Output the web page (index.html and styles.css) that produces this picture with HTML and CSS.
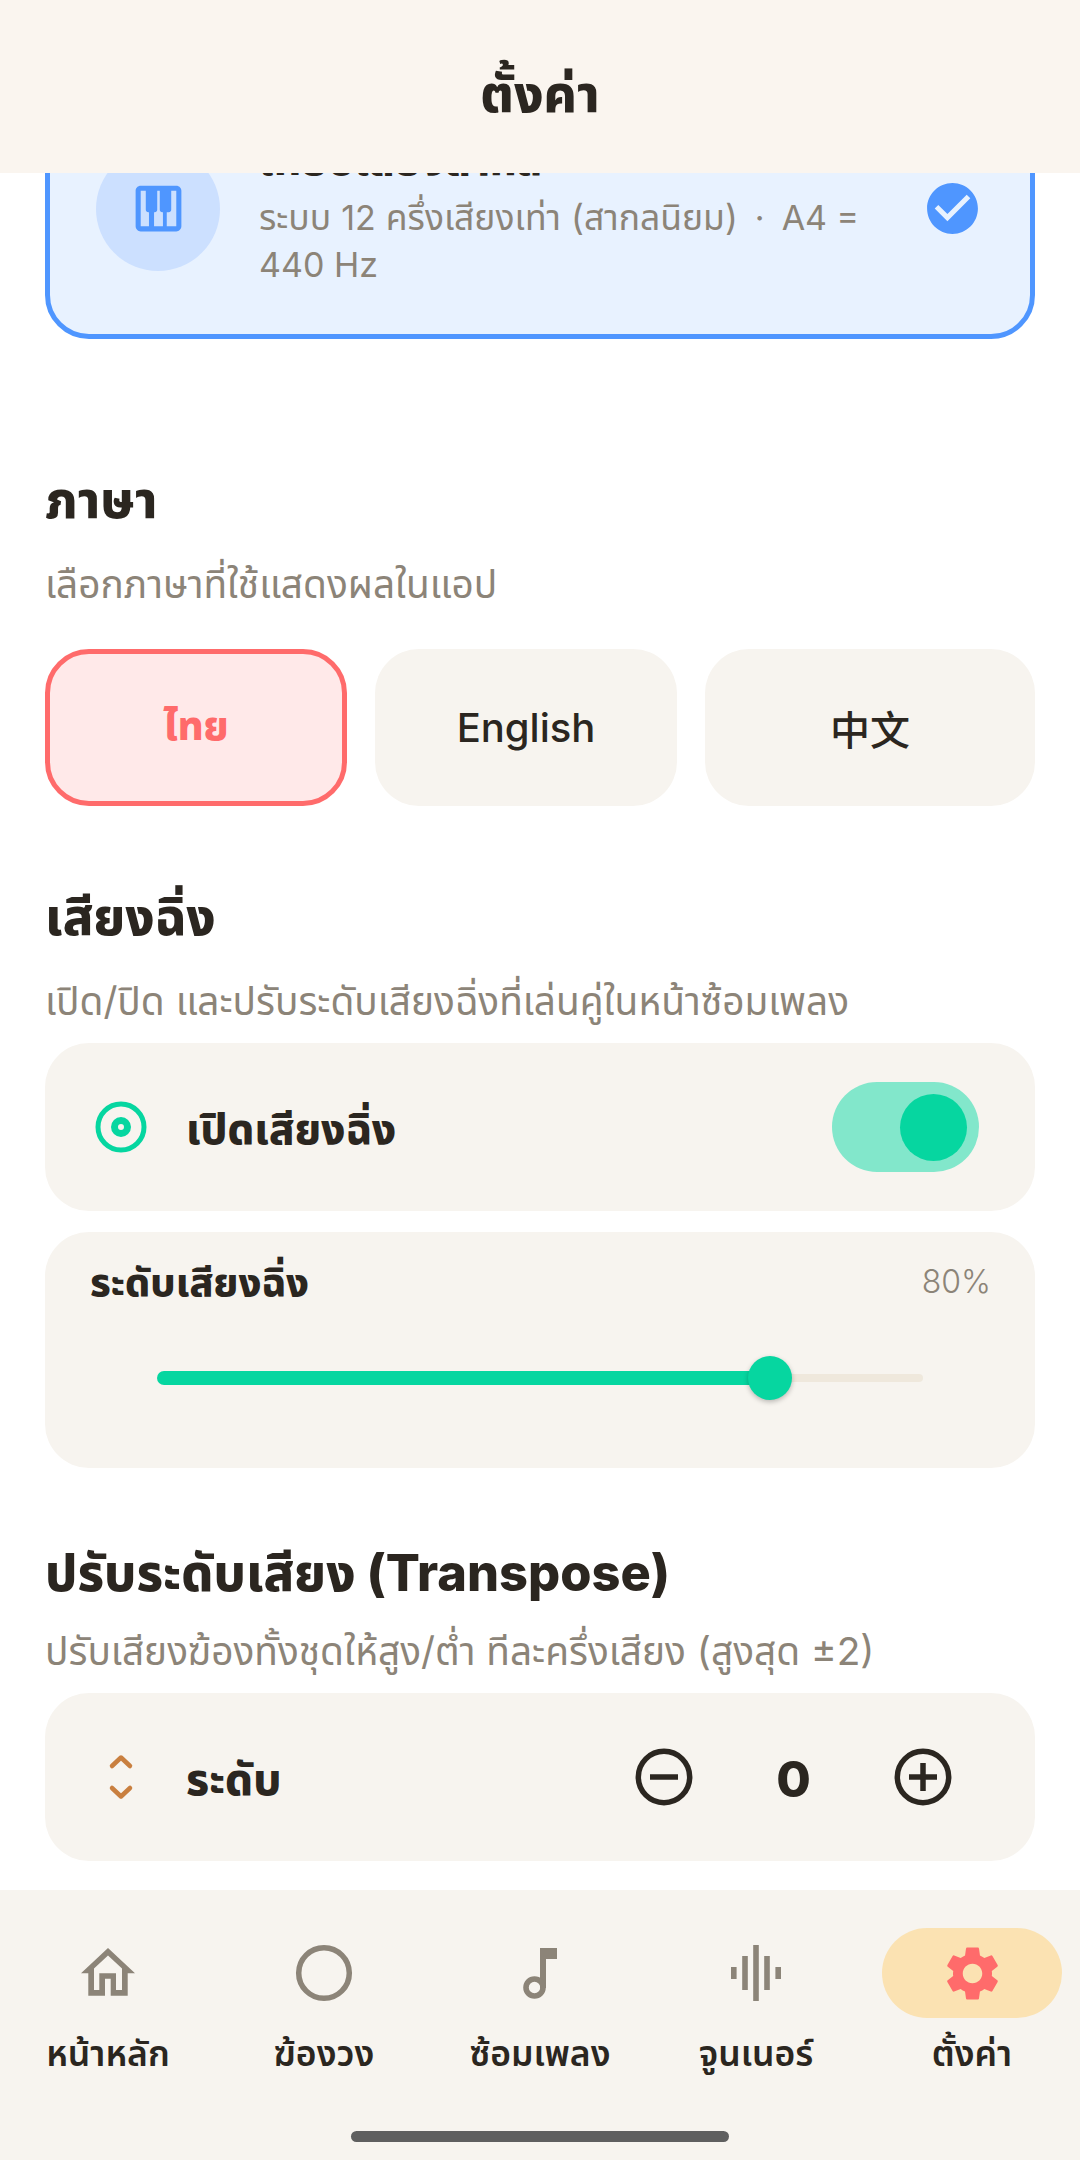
FILE: index.html
```html
<!DOCTYPE html>
<html lang="th">
<head>
    <meta charset="UTF-8">
    <meta name="viewport" content="width=device-width, initial-scale=1.0">
    <title>ตั้งค่า</title>
    <link rel="stylesheet" href="styles.css">
</head>
<body>
    <div class="app">
        <header class="top-bar">
            <h1 class="top-title">ตั้งค่า</h1>
        </header>

        <main class="content">
            <div class="tuning-card">
                <div class="tuning-icon">
                    <svg width="61" height="61" viewBox="0 0 24 24" fill="#4f96ff"><path d="M19 3H5c-1.1 0-2 .9-2 2v14c0 1.1.9 2 2 2h14c1.1 0 2-.9 2-2V5c0-1.1-.9-2-2-2zm-5.5 10.5h.25V19h-3.5v-5.5h.25c.55 0 1-.45 1-1V5h1v7.5c0 .55.45 1 1 1zM5 5h2v7.5c0 .55.45 1 1 1h.25V19H5V5zm14 14h-3.75v-5.5H16c.55 0 1-.45 1-1V5h2v14z"/></svg>
                </div>
                <div class="tuning-text">
                    <div class="tuning-name">เทียบเสียงสากล</div>
                    <div class="tuning-desc">ระบบ <span class="latin">12</span> ครึ่งเสียงเท่า (สากลนิยม) <span class="latin dot">·</span> <span class="latin">A4 =</span> <span class="latin">440 Hz</span></div>
                </div>
                <svg class="tuning-check" width="61" height="61" viewBox="0 0 24 24" fill="#4f96ff"><path d="M12 2C6.48 2 2 6.48 2 12s4.48 10 10 10 10-4.48 10-10S17.52 2 12 2zM10 17l-5-5 1.41-1.41L10 14.17l7.59-7.59L19 8l-9 9z"/></svg>
            </div>

            <section class="section section-lang">
                <h2 class="section-title">ภาษา</h2>
                <p class="section-sub">เลือกภาษาที่ใช้แสดงผลในแอป</p>
                <div class="lang-row">
                    <div class="lang-btn lang-active">ไทย</div>
                    <div class="lang-btn">English</div>
                    <div class="lang-btn">中文</div>
                </div>
            </section>

            <section class="section section-ching">
                <h2 class="section-title">เสียงฉิ่ง</h2>
                <p class="section-sub">เปิด/ปิด และปรับระดับเสียงฉิ่งที่เล่นคู่ในหน้าซ้อมเพลง</p>
                <div class="panel panel-row">
                    <svg class="row-icon" width="60" height="60" viewBox="0 0 60 60" fill="none" stroke="#06d6a0">
                        <circle cx="30" cy="30" r="23" stroke-width="5"/>
                        <circle cx="30" cy="30" r="6.5" stroke-width="7"/>
                    </svg>
                    <span class="row-label row-label-ching">เปิดเสียงฉิ่ง</span>
                    <div class="toggle"><div class="toggle-knob"></div></div>
                </div>
                <div class="panel panel-volume">
                    <div class="volume-head">
                        <span class="volume-label">ระดับเสียงฉิ่ง</span>
                        <span class="volume-value">80%</span>
                    </div>
                    <div class="slider">
                        <div class="slider-fill" style="width: 80%"></div>
                        <div class="slider-thumb"></div>
                        <div class="slider-rest"></div>
                    </div>
                </div>
            </section>

            <section class="section section-transpose">
                <h2 class="section-title">ปรับระดับเสียง (Transpose)</h2>
                <p class="section-sub">ปรับเสียงฆ้องทั้งชุดให้สูง/ต่ำ ทีละครึ่งเสียง (สูงสุด ±2)</p>
                <div class="panel panel-row">
                    <svg class="row-icon" width="60" height="60" viewBox="0 0 60 60" fill="none" stroke="#c97f3f" stroke-width="4.5" stroke-linecap="round" stroke-linejoin="round">
                        <polyline points="21,19 30,10.5 39,19"/>
                        <polyline points="21,41 30,49.5 39,41"/>
                    </svg>
                    <span class="row-label">ระดับ</span>
                    <div class="stepper">
                        <svg width="60" height="60" viewBox="0 0 60 60" fill="none" stroke="#2b2620" stroke-width="5.5">
                            <circle cx="30" cy="30" r="25.7"/>
                            <line x1="16" y1="30" x2="44" y2="30"/>
                        </svg>
                        <span class="stepper-value">0</span>
                        <svg width="60" height="60" viewBox="0 0 60 60" fill="none" stroke="#2b2620" stroke-width="5.5">
                            <circle cx="30" cy="30" r="25.7"/>
                            <line x1="16" y1="30" x2="44" y2="30"/>
                            <line x1="30" y1="16" x2="30" y2="44"/>
                        </svg>
                    </div>
                </div>
            </section>
        </main>

        <nav class="bottom-nav">
            <div class="nav-items">
                <div class="nav-item">
                    <div class="nav-icon">
                        <svg width="60" height="60" viewBox="0 0 60 60" fill="#8c8478"><path fill-rule="evenodd" d="M30 5L57 30.3H49.7V52.7H32.7V35.7H27V52.7H10.3V30.3H3ZM30 12.5L16 25.5V47H21.3V30.3H38V47H44V25.5Z"/></svg>
                    </div>
                    <span class="nav-label">หน้าหลัก</span>
                </div>
                <div class="nav-item">
                    <div class="nav-icon">
                        <svg width="60" height="60" viewBox="0 0 60 60" fill="none" stroke="#8c8478" stroke-width="5.5"><circle cx="30" cy="30" r="25.3"/></svg>
                    </div>
                    <span class="nav-label">ฆ้องวง</span>
                </div>
                <div class="nav-item">
                    <div class="nav-icon">
                        <svg width="60" height="60" viewBox="0 0 60 60" fill="#8c8478">
                            <rect x="30" y="5" width="17" height="11"/>
                            <rect x="30" y="5" width="6" height="40"/>
                            <circle cx="24.5" cy="44.5" r="8.5" fill="none" stroke="#8c8478" stroke-width="5.6"/>
                        </svg>
                    </div>
                    <span class="nav-label">ซ้อมเพลง</span>
                </div>
                <div class="nav-item">
                    <div class="nav-icon">
                        <svg width="60" height="60" viewBox="0 0 60 60" fill="#8c8478">
                            <rect x="5" y="24" width="5.6" height="12"/>
                            <rect x="16.2" y="13" width="5.6" height="34"/>
                            <rect x="27.2" y="2" width="5.6" height="56"/>
                            <rect x="38.2" y="13" width="5.6" height="34"/>
                            <rect x="49.4" y="24" width="5.6" height="12"/>
                        </svg>
                    </div>
                    <span class="nav-label">จูนเนอร์</span>
                </div>
                <div class="nav-item">
                    <div class="nav-icon nav-icon-active">
                        <svg width="65" height="65" viewBox="0 0 24 24" fill="#ff6b6b"><path d="M19.14 12.94c.04-.3.06-.61.06-.94 0-.32-.02-.64-.07-.94l2.03-1.58c.18-.14.23-.41.12-.61l-1.92-3.32c-.12-.22-.37-.29-.59-.22l-2.39.96c-.5-.38-1.03-.7-1.62-.94l-.36-2.54c-.04-.24-.24-.41-.48-.41h-3.84c-.24 0-.43.17-.47.41l-.36 2.54c-.59.24-1.13.57-1.62.94l-2.39-.96c-.22-.08-.47 0-.59.22L2.74 8.87c-.12.21-.08.47.12.61l2.03 1.58c-.05.3-.09.63-.09.94s.02.64.07.94l-2.03 1.58c-.18.14-.23.41-.12.61l1.92 3.32c.12.22.37.29.59.22l2.39-.96c.5.38 1.03.7 1.62.94l.36 2.54c.05.24.24.41.48.41h3.84c.24 0 .44-.17.47-.41l.36-2.54c.59-.24 1.13-.56 1.62-.94l2.39.96c.22.08.47 0 .59-.22l1.92-3.32c.12-.22.07-.47-.12-.61l-2.01-1.58zM12 15.6c-1.98 0-3.6-1.62-3.6-3.6s1.62-3.6 3.6-3.6 3.6 1.62 3.6 3.6-1.62 3.6-3.6 3.6z"/></svg>
                    </div>
                    <span class="nav-label">ตั้งค่า</span>
                </div>
            </div>
            <div class="home-bar"></div>
        </nav>
    </div>
</body>
</html>
```

FILE: styles.css
```css
* {
    box-sizing: border-box;
}

body {
    font-family: Inter, "Noto Sans Thai", "Noto Sans", "Noto Sans CJK SC", sans-serif;
    background-color: #fff;
    color: #2b2620;
    margin: 0;
    padding: 0;
}

.app {
    width: 1080px;
    height: 2160px;
    display: flex;
    flex-direction: column;
    overflow: hidden;
}

/* header */
.top-bar {
    height: 173px;
    flex: none;
    background-color: #faf5ef;
    display: flex;
    align-items: center;
    justify-content: center;
    position: relative;
    z-index: 1;
}

.top-title {
    margin: 0;
    font-size: 51px;
    font-weight: 800;
    line-height: 60px;
    padding-top: 14px;
}

/* scrolled content */
.content {
    flex: 1;
    min-height: 0;
    padding: 0 45px;
}

.tuning-card {
    margin-top: -95px;
    height: 261px;
    padding: 0 47px 0 46px;
    background-color: #e8f2ff;
    border: 5px solid #4f96ff;
    border-radius: 44px;
    display: flex;
    align-items: center;
}

.tuning-icon {
    width: 124px;
    height: 124px;
    flex: none;
    border-radius: 50%;
    background-color: #cce0ff;
    display: flex;
    align-items: center;
    justify-content: center;
}

.tuning-text {
    flex: 1;
    margin-left: 39px;
    padding-right: 40px;
}

.tuning-name {
    font-size: 42px;
    font-weight: 800;
    line-height: 60px;
    margin-bottom: 4px;
}

.tuning-desc {
    font-size: 35.5px;
    line-height: 47px;
    color: #8c8478;
}

.latin {
    display: inline-block;
    font-size: 34px;
    line-height: 47px;
}

.dot {
    margin: 0 7px;
}

.tuning-check {
    flex: none;
}

/* sections */
.section-lang {
    margin-top: 131px;
}

.section-ching {
    margin-top: 81px;
}

.section-transpose {
    margin-top: 75px;
}

.section-title {
    margin: 0;
    font-size: 50.5px;
    font-weight: 800;
    line-height: 60px;
}

.section-sub {
    margin: 30px 0 0;
    font-size: 38.8px;
    line-height: 48px;
    color: #8c8478;
}

.section-transpose .section-sub {
    margin-top: 24px;
}

/* language */
.lang-row {
    display: grid;
    grid-template-columns: 302px 302px 1fr;
    gap: 28px;
    margin-top: 41px;
}

.lang-btn {
    height: 157px;
    background-color: #f7f4ef;
    border-radius: 44px;
    display: flex;
    align-items: center;
    justify-content: center;
    font-size: 40px;
    font-weight: 500;
}

.lang-active {
    background-color: #ffe9e9;
    border: 5px solid #ff6b6b;
    color: #ff6b6b;
    font-weight: 800;
}

/* panels */
.panel {
    background-color: #f7f4ef;
    border-radius: 44px;
}

.panel-row {
    height: 168px;
    margin-top: 18px;
    padding: 0 56px 0 46px;
    display: flex;
    align-items: center;
}

.row-icon {
    flex: none;
}

.row-label {
    flex: 1;
    margin-left: 35px;
    padding-top: 8px;
    font-size: 44px;
    font-weight: 800;
}

.row-label-ching {
    font-size: 42px;
}

.toggle {
    width: 147px;
    height: 90px;
    border-radius: 45px;
    background-color: #82e7cb;
    display: flex;
    align-items: center;
    justify-content: flex-end;
    padding-right: 12px;
}

.toggle-knob {
    width: 67px;
    height: 67px;
    border-radius: 50%;
    background-color: #06d6a0;
}

.panel-volume {
    height: 236px;
    margin-top: 21px;
    padding: 26px 44px 0 45px;
}

.volume-head {
    display: flex;
    justify-content: space-between;
    align-items: center;
    line-height: 48px;
}

.volume-label {
    font-size: 39.5px;
    font-weight: 800;
}

.volume-value {
    font-size: 32px;
    font-weight: 300;
    color: #8c8478;
}

.slider {
    display: flex;
    align-items: center;
    margin: 50px 68px 0 67px;
    height: 44px;
}

.slider-fill {
    height: 14px;
    background-color: #06d6a0;
    border-radius: 7px 0 0 7px;
}

.slider-thumb {
    width: 44px;
    height: 44px;
    flex: none;
    margin: 0 -22px;
    border-radius: 50%;
    background-color: #06d6a0;
    box-shadow: 0 2px 5px rgba(0, 0, 0, 0.25);
    position: relative;
    z-index: 1;
}

.slider-rest {
    flex: 1;
    height: 8px;
    background-color: #efe8dc;
    border-radius: 0 4px 4px 0;
}

/* transpose stepper */
.stepper {
    display: flex;
    align-items: center;
    margin-right: 26px;
}

.stepper-value {
    width: 199px;
    padding-top: 3px;
    text-align: center;
    font-size: 50px;
    font-weight: 800;
}

/* bottom nav */
.bottom-nav {
    height: 270px;
    flex: none;
    background-color: #f7f4ef;
    position: relative;
    z-index: 1;
    padding-top: 38px;
}

.nav-items {
    display: flex;
}

.nav-item {
    width: 216px;
    display: flex;
    flex-direction: column;
    align-items: center;
}

.nav-icon {
    width: 180px;
    height: 90px;
    border-radius: 45px;
    display: flex;
    align-items: center;
    justify-content: center;
}

.nav-icon-active {
    background-color: #fbe2b2;
}

.nav-label {
    margin-top: 12px;
    font-size: 35.5px;
    font-weight: 600;
    line-height: 48px;
}

.home-bar {
    width: 378px;
    height: 11px;
    border-radius: 6px;
    background-color: #5f5f5f;
    position: absolute;
    left: 351px;
    bottom: 18px;
}
```
